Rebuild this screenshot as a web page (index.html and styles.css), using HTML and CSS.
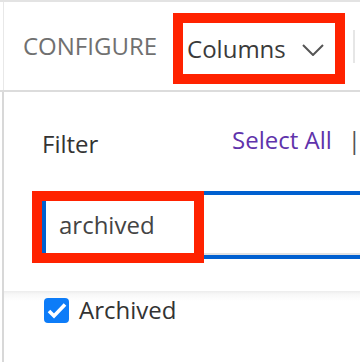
FILE: index.html
```html
<!DOCTYPE html>
<html>
<head>
<meta charset="utf-8">
<link rel="stylesheet" href="styles.css">
</head>
<body>
<div class="page">
  <div class="topline"></div>
  <div class="toolbar">
    <span class="configure">CONFIGURE</span>
    <button class="columns">
      <span class="columns-text">Columns</span>
      <svg class="chevron" width="22" height="12" viewBox="0 0 22 12"><polyline points="1,1 11,11 21,1" fill="none" stroke="#555" stroke-width="2"/></svg>
      <span class="annot annot-btn"></span>
    </button>
    <span class="sep"></span>
  </div>
  <div class="divider"></div>
  <div class="panel">
    <div class="filter-head">
      <span class="filter-label">Filter</span>
      <span class="links"><a class="link">Select All</a><span class="pipe">|</span></span>
    </div>
    <div class="filter-field">
      <input class="filter-input" type="text" value="archived">
      <span class="annot annot-input"></span>
    </div>
    <div class="list">
      <label class="item">
        <span class="check"><svg width="25" height="25" viewBox="0 0 25 25"><polyline points="5,13 10,18 21,6.5" fill="none" stroke="#fff" stroke-width="3.6" stroke-linejoin="miter"/></svg></span>
        <span class="item-text">Archived</span>
      </label>
    </div>
  </div>
</div>
</body>
</html>
```

FILE: styles.css
```css
html, body {
  margin: 0;
  padding: 0;
  background: #fff;
  overflow: hidden;
}
.page {
  width: 360px;
  height: 362px;
  overflow: hidden;
  font-family: "Open Sans", "Noto Sans", sans-serif;
  font-size: 24px;
  line-height: 32px;
}
.topline {
  height: 2px;
  background: #e3e3e3;
}
.toolbar {
  display: flex;
  align-items: center;
  height: 88px;
  margin-left: 3px;
  border-left: 1px solid #e8e8e8;
  padding-left: 19px;
  white-space: nowrap;
}
.configure {
  color: #707070;
}
.columns {
  position: relative;
  display: flex;
  align-items: center;
  box-sizing: border-box;
  width: 152px;
  height: 51px;
  margin-left: 26px;
  margin-top: 5px;
  padding: 0 0 0 4px;
  border: none;
  background: #fff;
  font: inherit;
  color: #3a3a3a;
  flex: 0 0 auto;
}
.chevron {
  margin-left: auto;
  margin-right: 11px;
  margin-top: 3px;
}
.annot {
  position: absolute;
  box-sizing: border-box;
  border: 10px solid #ff2200;
  pointer-events: none;
}
.annot-btn {
  left: -10px;
  top: -10px;
  width: 172px;
  height: 71px;
}
.sep {
  flex: 0 0 auto;
  width: 2px;
  height: 33px;
  margin-left: 18px;
  background: #e6e6e6;
}
.divider {
  height: 2px;
  background: #dcdcdc;
}
.panel {
  margin-left: 2px;
  border-left: 2px solid #d8d8d8;
  padding-left: 38px;
  padding-top: 32px;
  height: 300px;
}
.filter-head {
  display: flex;
  align-items: flex-start;
  white-space: nowrap;
}
.filter-label {
  flex: 0 0 190px;
  margin-top: 4px;
  color: #333;
}
.links {
  display: flex;
}
.link {
  color: #5f33ab;
}
.pipe {
  color: #555;
  margin-left: 16px;
}
.filter-field {
  position: relative;
  margin-top: 31px;
  width: 420px;
}
.filter-input {
  display: block;
  box-sizing: border-box;
  width: 420px;
  height: 68px;
  margin: 0;
  padding: 0 0 2px 13px;
  border: 4px solid #0060d0;
  border-radius: 0 0 0 4px;
  box-shadow: inset 0 -2px 0 #e2e2e2;
  font: inherit;
  line-height: 32px;
  color: #444;
  background: #fff;
  outline: none;
}
.annot-input {
  left: -10px;
  top: 0;
  width: 172px;
  height: 72px;
}
.list {
  margin-top: 32px;
  margin-left: -38px;
  padding-left: 40px;
  padding-top: 3px;
  background: linear-gradient(#ececec 0, #f7f7f7 3px, #fff 10px);
}
.item {
  display: flex;
  align-items: center;
  height: 32px;
}
.check {
  display: block;
  width: 25px;
  height: 25px;
  border-radius: 4px;
  background: #0d7cf8;
}
.check svg {
  display: block;
}
.item-text {
  margin-left: 10px;
  color: #333;
}
```
